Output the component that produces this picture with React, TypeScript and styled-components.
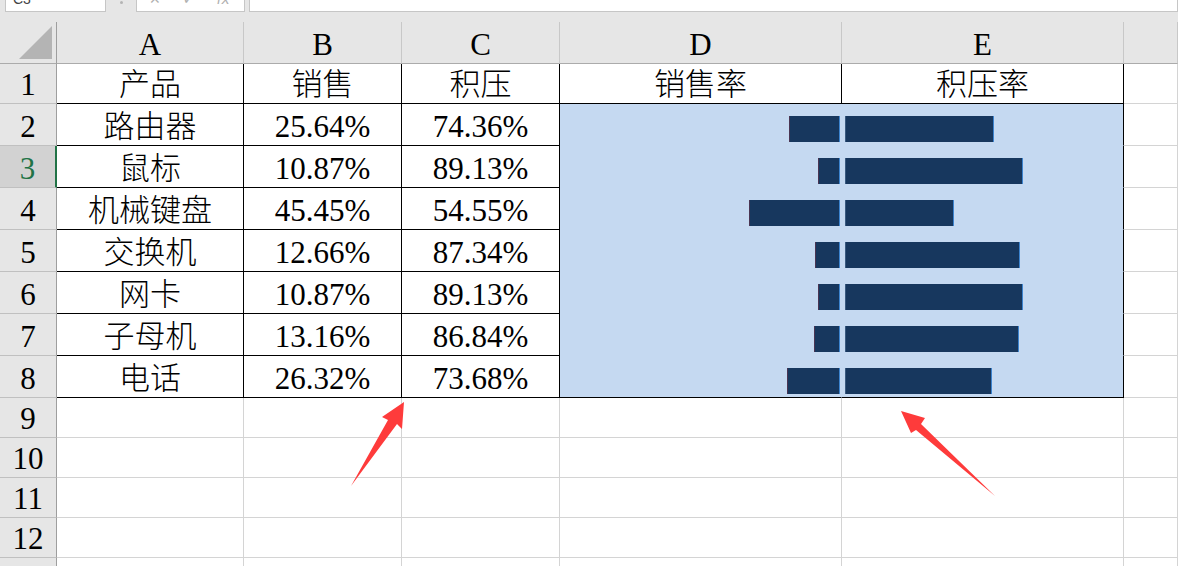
import React from "react";
import styled, { createGlobalStyle } from "styled-components";

const GlobalStyle = createGlobalStyle`
  * { box-sizing: border-box; }
  html, body { margin: 0; padding: 0; background: #fff; overflow: hidden; }
  #root { width: 1178px; height: 566px; }
`;

type Item = { name: string; sale: number; stock: number };

const items: Item[] = [
  { name: "路由器", sale: 25.64, stock: 74.36 },
  { name: "鼠标", sale: 10.87, stock: 89.13 },
  { name: "机械键盘", sale: 45.45, stock: 54.55 },
  { name: "交换机", sale: 12.66, stock: 87.34 },
  { name: "网卡", sale: 10.87, stock: 89.13 },
  { name: "子母机", sale: 13.16, stock: 86.84 },
  { name: "电话", sale: 26.32, stock: 73.68 },
];

const columns = ["A", "B", "C", "D", "E", ""];
const BLACK = "#000";
const GRID = "#d4d4d4";
const FILL = "#c5d9f1";

const App: React.FC = () => {
  const emptyRows = [9, 10, 11, 12, 13];

  return (
    <Sheet>
      <GlobalStyle />
      <FormulaStrip>
        <NameBox>
          <span>C3</span>
        </NameBox>
        <Dots />
        <FxBox>
          <FxGlyph>✕</FxGlyph>
          <FxGlyph>✓</FxGlyph>
          <FxGlyph $italic>fx</FxGlyph>
        </FxBox>
        <FormulaInput />
      </FormulaStrip>

      <Grid>
        <Corner>
          <Triangle />
        </Corner>
        {columns.map((c, i) => (
          <ColHead key={i}>{c}</ColHead>
        ))}

        {/* row 1: titles */}
        <RowHead>1</RowHead>
        <Cell $r={BLACK} $b={BLACK}>产品</Cell>
        <Cell $r={BLACK} $b={BLACK}>销售</Cell>
        <Cell $r={BLACK} $b={BLACK}>积压</Cell>
        <Cell $r={BLACK} $b={BLACK}>销售率</Cell>
        <Cell $r={BLACK} $b={BLACK}>积压率</Cell>
        <Cell />

        {items.map((it, i) => {
          const last = i === items.length - 1;
          return (
            <React.Fragment key={it.name}>
              <RowHead $active={i === 1}>{i + 2}</RowHead>
              <Cell $r={BLACK} $b={BLACK}>{it.name}</Cell>
              <Cell $r={BLACK} $b={BLACK}>{it.sale.toFixed(2)}%</Cell>
              <Cell $r={BLACK} $b={BLACK}>{it.stock.toFixed(2)}%</Cell>
              <BarCell $side="left" $b={last ? BLACK : FILL} $r={FILL}>
                <Bar $side="left" style={{ width: Math.round(it.sale * 2) }} />
              </BarCell>
              <BarCell $side="right" $b={last ? BLACK : FILL} $r={BLACK}>
                <Bar $side="right" style={{ width: Math.round(it.stock * 2) }} />
              </BarCell>
              <Cell />
            </React.Fragment>
          );
        })}

        {emptyRows.map((n) => (
          <React.Fragment key={n}>
            <RowHead>{n}</RowHead>
            {columns.map((_, i) => (
              <Cell key={i} />
            ))}
          </React.Fragment>
        ))}
      </Grid>

      <Arrows viewBox="0 0 1178 566" width="1178" height="566">
        <polygon
          points="404,402 402,429 397,424 351,486 388,420 382,417"
          fill="#fe3b3b"
        />
        <polygon
          points="901,411 925,418 921,424 995,496 916,430 911,433"
          fill="#fe3b3b"
        />
      </Arrows>
    </Sheet>
  );
};

// Styled Components

const Sheet = styled.div`
  position: relative;
  width: 1178px;
  height: 566px;
  overflow: hidden;
  background: #fff;
`;

const FormulaStrip = styled.div`
  display: flex;
  align-items: flex-start;
  height: 22px;
  padding-left: 5px;
  background: #e6e6e6;
`;

const Box = styled.div`
  height: 12px;
  background: #fff;
  border: 1px solid #c6c6c6;
  border-top: none;
  overflow: hidden;
`;

const NameBox = styled(Box)`
  width: 101px;
  display: flex;
  align-items: flex-end;
  padding: 0 0 5px 7px;
  font-family: "Liberation Sans", sans-serif;
  font-size: 14px;
  line-height: 14px;
  color: #444;
`;

const Dots = styled.div`
  width: 3px;
  height: 3px;
  margin: 1px 13px 0 14px;
  border-radius: 50%;
  background: #b4b4b4;
`;

const FxBox = styled(Box)`
  width: 109px;
  display: flex;
  align-items: flex-end;
  gap: 22px;
  padding: 0 0 5px 12px;
`;

const FxGlyph = styled.span<{ $italic?: boolean }>`
  font-family: "DejaVu Sans", sans-serif;
  font-size: 14px;
  line-height: 14px;
  font-style: ${(p) => (p.$italic ? "italic" : "normal")};
  color: #b0b0b0;
`;

const FormulaInput = styled(Box)`
  flex: 1;
  margin-left: 4px;
`;

const Grid = styled.div`
  display: grid;
  grid-template-columns: 57px 187px 158px 158px 282px 282px 1fr;
  grid-template-rows: 42px 40px repeat(7, 42px) repeat(5, 40px);
  font-family: "Liberation Serif", "Noto Sans CJK SC", serif;
  font-size: 31px;
  font-weight: 300;
  line-height: 30px;
  color: #000;
`;

const Corner = styled.div`
  display: flex;
  align-items: flex-end;
  justify-content: flex-end;
  padding: 0 4px 4px 0;
  background: #e6e6e6;
  border-right: 1px solid #9e9e9e;
  border-bottom: 1px solid #ababab;
`;

const Triangle = styled.div`
  width: 0;
  height: 0;
  border-left: 33px solid transparent;
  border-bottom: 33px solid #b4b4b4;
`;

const ColHead = styled.div`
  display: flex;
  align-items: flex-end;
  justify-content: center;
  padding-bottom: 3px;
  background: #e6e6e6;
  border-right: 1px solid #c8c8c8;
  border-bottom: 1px solid #ababab;
`;

const RowHead = styled.div<{ $active?: boolean }>`
  display: flex;
  align-items: flex-end;
  justify-content: center;
  padding-bottom: 3px;
  background: ${(p) => (p.$active ? "#d2d2d2" : "#e6e6e6")};
  color: ${(p) => (p.$active ? "#217346" : "#000")};
  border-right: ${(p) => (p.$active ? "2px solid #217346" : "1px solid #9e9e9e")};
  border-bottom: 1px solid #c0c0c0;
`;

const Cell = styled.div<{ $r?: string; $b?: string }>`
  display: flex;
  align-items: flex-end;
  justify-content: center;
  padding-bottom: 3px;
  white-space: nowrap;
  background: #fff;
  border-right: 1px solid ${(p) => p.$r ?? GRID};
  border-bottom: 1px solid ${(p) => p.$b ?? GRID};
`;

const BarCell = styled.div<{ $side: "left" | "right"; $r: string; $b: string }>`
  display: flex;
  align-items: flex-start;
  justify-content: ${(p) => (p.$side === "left" ? "flex-end" : "flex-start")};
  padding: ${(p) => (p.$side === "left" ? "12px 1px 0 0" : "12px 0 0 3px")};
  background: ${FILL};
  border-right: 1px solid ${(p) => p.$r};
  border-bottom: 1px solid ${(p) => p.$b};
`;

const Bar = styled.div<{ $side: "left" | "right" }>`
  height: 26px;
  background: #17375e;
  border-left: 1px solid ${(p) => (p.$side === "left" ? "#4a3553" : "#3a5a80")};
  border-right: 1px solid #3d84cf;
`;

const Arrows = styled.svg`
  position: absolute;
  top: 0;
  left: 0;
  pointer-events: none;
`;

export default App;
